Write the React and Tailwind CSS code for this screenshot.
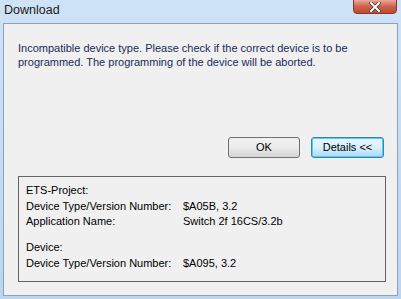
export default function App() {
  const font = { fontFamily: '"Liberation Sans", Arial, sans-serif' }
  return (
    <div className="w-[401px] h-[299px] bg-gradient-to-b from-[#cfe3f6] to-[#bcd6f0] flex flex-col overflow-hidden" style={font}>
      {/* title bar */}
      <div className="h-[23px] flex items-start justify-between pl-[4px] pr-[4px] relative">
        <span className="text-[12.5px] text-[#1a1a1a] mt-[1px]">Download</span>
        <div className="w-[44px] h-[15px] mt-[-1px] rounded-b-[4px] border border-[#7a3a32] bg-gradient-to-b from-[#e8a89c] via-[#d0604c] to-[#c04a32] flex items-center justify-center">
          <svg width="12" height="10" viewBox="0 0 12 10">
            <path d="M2 1 L10 9 M10 1 L2 9" stroke="#3b3b3b" strokeWidth="3.6" strokeLinecap="square" />
            <path d="M2 1 L10 9 M10 1 L2 9" stroke="#ffffff" strokeWidth="2" strokeLinecap="square" />
          </svg>
        </div>
      </div>

      {/* client */}
      <div className="flex-1 mx-[3px] mb-[3px] bg-[#f0f0f0] border border-[#8da2ba] flex flex-col pl-[14px] pr-[12px] pt-[17px] text-[11px] text-black">
        <p className="leading-[14px] text-[#1a2a5a]">
          Incompatible device type. Please check if the correct device is to be programmed. The programming of the device will be aborted.
        </p>

        <div className="flex justify-end gap-[11px] mt-[68px] pr-[1px]">
          <button className="w-[72px] h-[21px] rounded-[3px] border border-[#707070] bg-gradient-to-b from-[#f2f2f2] via-[#ebebeb] to-[#d5d5d5] text-[11px] text-black">
            OK
          </button>
          <button className="w-[73px] h-[21px] rounded-[3px] border border-[#3c7fb1] bg-gradient-to-b from-[#eaf6fd] via-[#d9f0fc] to-[#a7d9f5] shadow-[inset_0_0_0_1px_#48d2f8] text-[11px] text-black">
            Details &lt;&lt;
          </button>
        </div>

        <div className="mt-[18px] ml-[0px] w-[368px] h-[106px] border border-[#646464] px-[7px] pt-[6px] leading-[15.7px]">
          <div>ETS-Project:</div>
          <div className="flex"><span className="w-[157px]">Device Type/Version Number:</span><span>$A05B, 3.2</span></div>
          <div className="flex"><span className="w-[157px]">Application Name:</span><span>Switch 2f 16CS/3.2b</span></div>
          <div className="mt-[10px]">Device:</div>
          <div className="flex"><span className="w-[157px]">Device Type/Version Number:</span><span>$A095, 3.2</span></div>
        </div>
      </div>
    </div>
  )
}
